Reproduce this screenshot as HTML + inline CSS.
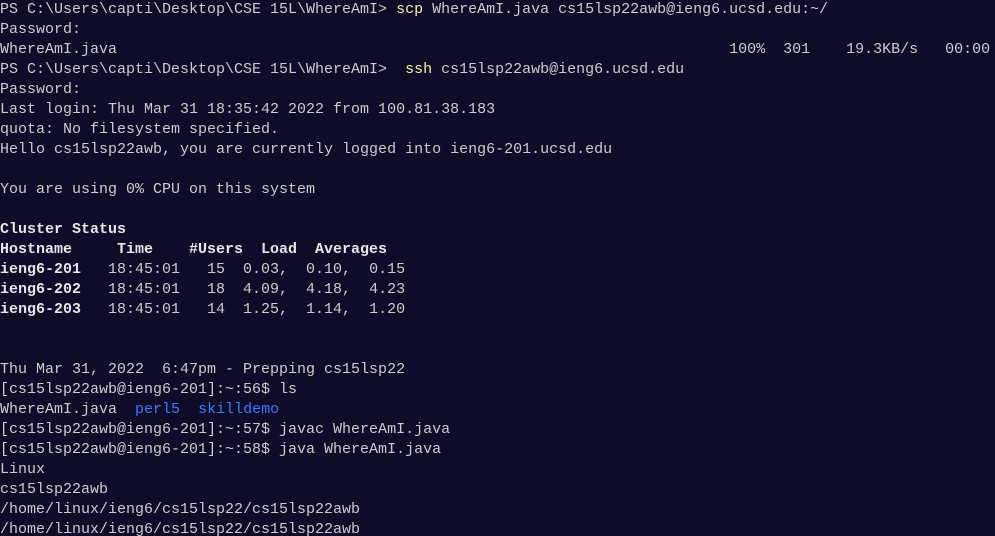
<!DOCTYPE html>
<html><head><meta charset="utf-8"><style>
html,body{margin:0;padding:0;background:#0f0c29;width:995px;height:536px;overflow:hidden}
#w{position:relative;width:995px;height:536px;overflow:hidden}
.t{position:absolute;top:0px;left:0;font-family:"Liberation Mono",monospace;font-size:15px;color:#cccccc}
.t div{height:20px;line-height:20px;white-space:pre;overflow:visible}
.y{color:#f9f1a5}.b{color:#3b78ff}strong{font-weight:bold;color:#e6e6e6}
</style></head><body><div id="w"><div class="t">
<div>PS C:\Users\capti\Desktop\CSE 15L\WhereAmI> <span class="y">scp</span> WhereAmI.java cs15lsp22awb@ieng6.ucsd.edu:~/</div>
<div>Password:</div>
<div>WhereAmI.java                                                                    100%  301    19.3KB/s   00:00</div>
<div>PS C:\Users\capti\Desktop\CSE 15L\WhereAmI>  <span class="y">ssh</span> cs15lsp22awb@ieng6.ucsd.edu</div>
<div>Password:</div>
<div>Last login: Thu Mar 31 18:35:42 2022 from 100.81.38.183</div>
<div>quota: No filesystem specified.</div>
<div>Hello cs15lsp22awb, you are currently logged into ieng6-201.ucsd.edu</div>
<div> </div>
<div>You are using 0% CPU on this system</div>
<div> </div>
<div><strong>Cluster Status</strong></div>
<div><strong>Hostname     Time    #Users  Load  Averages</strong></div>
<div><strong>ieng6-201</strong>   18:45:01   15  0.03,  0.10,  0.15</div>
<div><strong>ieng6-202</strong>   18:45:01   18  4.09,  4.18,  4.23</div>
<div><strong>ieng6-203</strong>   18:45:01   14  1.25,  1.14,  1.20</div>
<div> </div>
<div> </div>
<div>Thu Mar 31, 2022  6:47pm - Prepping cs15lsp22</div>
<div>[cs15lsp22awb@ieng6-201]:~:56$ ls</div>
<div>WhereAmI.java  <span class="b">perl5</span>  <span class="b">skilldemo</span></div>
<div>[cs15lsp22awb@ieng6-201]:~:57$ javac WhereAmI.java</div>
<div>[cs15lsp22awb@ieng6-201]:~:58$ java WhereAmI.java</div>
<div>Linux</div>
<div>cs15lsp22awb</div>
<div>/home/linux/ieng6/cs15lsp22/cs15lsp22awb</div>
<div>/home/linux/ieng6/cs15lsp22/cs15lsp22awb</div>
</div></div></body></html>
